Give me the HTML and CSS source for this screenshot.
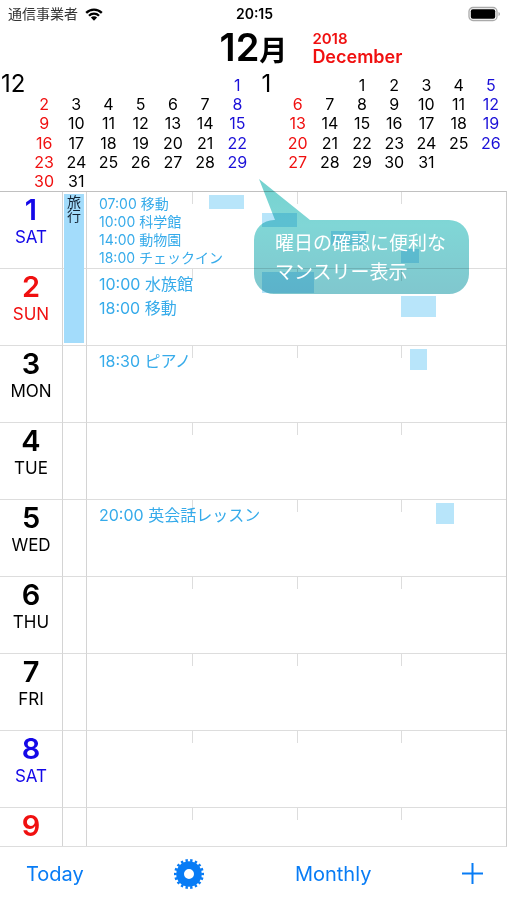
FILE: index.html
```html
<!DOCTYPE html>
<html lang="ja">
<head>
<meta charset="utf-8">
<meta name="viewport" content="width=device-width, initial-scale=1">
<title>12月</title>
<link rel="stylesheet" href="styles.css">
</head>
<body>
<div class="status">
  <div class="carrier">
    <span>通信事業者</span>
    <svg width="18" height="13" viewBox="0 0 18 13" aria-hidden="true"><path d="M1.2 4.900a11 11 0 0 1 15.600 0M4 7.800a7 7 0 0 1 10 0" fill="none" stroke="#000" stroke-width="2.300"/><path d="M5.900 9.500a4.400 4.400 0 0 1 6.200 0L9 12.700z"/></svg>
  </div>
  <div class="clock">20:15</div>
  <svg class="battery" width="33" height="16" viewBox="0 0 33 16" aria-hidden="true"><rect x="1" y="1.500" width="28" height="13" rx="4" fill="#fff" stroke="#aaa" stroke-width="1.300"/><rect x="2.800" y="3.300" width="24.400" height="9.400" rx="2"/><path d="M30.500 6v4q1.500-.5 1.500-2t-1.500-2" fill="#aaa"/></svg>
</div>

<header class="title">
  <h1>12<span>月</span></h1>
  <div class="title-en"><div class="year">2018</div><div class="month">December</div></div>
</header>

<div class="months">
  <section class="mini">
    <h2>12</h2>
    <table>
      <tr><td></td><td></td><td></td><td></td><td></td><td></td><td>1</td></tr>
      <tr><td>2</td><td>3</td><td>4</td><td>5</td><td>6</td><td>7</td><td>8</td></tr>
      <tr><td>9</td><td>10</td><td>11</td><td>12</td><td>13</td><td>14</td><td>15</td></tr>
      <tr><td>16</td><td>17</td><td>18</td><td>19</td><td>20</td><td>21</td><td>22</td></tr>
      <tr><td>23</td><td>24</td><td>25</td><td>26</td><td>27</td><td>28</td><td>29</td></tr>
      <tr><td>30</td><td>31</td><td></td><td></td><td></td><td></td><td></td></tr>
    </table>
  </section>
  <section class="mini">
    <h2 class="next">1</h2>
    <table>
      <tr><td></td><td></td><td>1</td><td>2</td><td>3</td><td>4</td><td>5</td></tr>
      <tr><td>6</td><td>7</td><td>8</td><td>9</td><td>10</td><td>11</td><td>12</td></tr>
      <tr><td>13</td><td>14</td><td>15</td><td>16</td><td>17</td><td>18</td><td>19</td></tr>
      <tr><td>20</td><td>21</td><td>22</td><td>23</td><td>24</td><td>25</td><td>26</td></tr>
      <tr><td>27</td><td>28</td><td>29</td><td>30</td><td>31</td><td></td><td></td></tr>
      <tr><td>&nbsp;</td><td></td><td></td><td></td><td></td><td></td><td></td></tr>
    </table>
  </section>
</div>

<main class="week">
  <div class="span-event">旅行</div>

  <div class="date sat"><b>1</b><span>SAT</span></div>
  <div class="lane"></div>
  <div class="timeline small">
    <div class="ticks"><i></i><i></i><i></i><i></i></div>
    <div class="event"><div class="bar" style="grid-column: 15 / span 4"></div><p>07:00 移動</p></div>
    <div class="event"><div class="bar" style="grid-column: 21 / span 4"></div><p>10:00 科学館</p></div>
    <div class="event"><div class="bar" style="grid-column: 29 / span 4"></div><p>14:00 動物園</p></div>
    <div class="event"><div class="bar" style="grid-column: 37 / span 2"></div><p>18:00 チェックイン</p></div>
  </div>

  <div class="date sun"><b>2</b><span>SUN</span></div>
  <div class="lane"></div>
  <div class="timeline">
    <div class="ticks"><i></i><i></i><i></i><i></i></div>
    <div class="event"><div class="bar" style="grid-column: 21 / span 6"></div><p>10:00 水族館</p></div>
    <div class="event"><div class="bar" style="grid-column: 37 / span 4"></div><p>18:00 移動</p></div>
  </div>

  <div class="date"><b>3</b><span>MON</span></div>
  <div class="lane"></div>
  <div class="timeline">
    <div class="ticks"><i></i><i></i><i></i><i></i></div>
    <div class="event"><div class="bar" style="grid-column: 38 / span 2"></div><p>18:30 ピアノ</p></div>
  </div>

  <div class="date"><b>4</b><span>TUE</span></div>
  <div class="lane"></div>
  <div class="timeline"><div class="ticks"><i></i><i></i><i></i><i></i></div></div>

  <div class="date"><b>5</b><span>WED</span></div>
  <div class="lane"></div>
  <div class="timeline">
    <div class="ticks"><i></i><i></i><i></i><i></i></div>
    <div class="event"><div class="bar" style="grid-column: 41 / span 2"></div><p>20:00 英会話レッスン</p></div>
  </div>

  <div class="date"><b>6</b><span>THU</span></div>
  <div class="lane"></div>
  <div class="timeline"><div class="ticks"><i></i><i></i><i></i><i></i></div></div>

  <div class="date"><b>7</b><span>FRI</span></div>
  <div class="lane"></div>
  <div class="timeline"><div class="ticks"><i></i><i></i><i></i><i></i></div></div>

  <div class="date sat"><b>8</b><span>SAT</span></div>
  <div class="lane"></div>
  <div class="timeline"><div class="ticks"><i></i><i></i><i></i><i></i></div></div>

  <div class="date sun"><b>9</b></div>
  <div class="lane"></div>
  <div class="timeline"><div class="ticks"><i></i><i></i><i></i><i></i></div></div>
</main>

<nav class="toolbar">
  <button type="button">Today</button>
  <button type="button" aria-label="Settings">
    <svg width="30" height="30" viewBox="0 0 30 30"><circle cx="15" cy="15" r="8.900" fill="none" stroke="currentColor" stroke-width="7.800"/><circle cx="15" cy="15" r="13.600" fill="none" stroke="currentColor" stroke-width="2.800" pathLength="36" stroke-dasharray="1 1" stroke-dashoffset=".5"/></svg>
  </button>
  <button type="button">Monthly</button>
  <button type="button" aria-label="Add">
    <svg width="21" height="21" viewBox="0 0 21 21"><path d="M10.500 0v21M0 10.500h21" stroke="currentColor" stroke-width="2"/></svg>
  </button>
</nav>

<svg class="callout-shape" width="215" height="115" viewBox="0 0 215 115" aria-hidden="true">
  <defs><linearGradient id="teal" x1="0" y1="0" x2="0" y2="1"><stop offset="0" stop-color="#74d2cf"/><stop offset=".4" stop-color="#80d6d6"/><stop offset="1" stop-color="#80c7ce"/></linearGradient></defs>
  <path fill="url(#teal)" d="M5 0L56 41H195a20 20 0 0 1 20 20V95a20 20 0 0 1-20 20H20a20 20 0 0 1-20-20V61a20 20 0 0 1 20-20H21z"/>
</svg>
<p class="callout-text">曜日の確認に便利な<br>マンスリー表示</p>
</body>
</html>
```
FILE: styles.css
```css
* { box-sizing: border-box; }

body {
  position: relative;
  display: flex;
  flex-direction: column;
  height: 100vh;
  margin: 0;
  background: #fff;
  color: #000;
  font-family: Inter, "Noto Sans CJK JP", sans-serif;
  overflow: hidden;
}

h1, h2, p { margin: 0; font-weight: 400; }

.status {
  display: grid;
  grid-template-columns: 1fr auto 1fr;
  align-items: center;
  height: 28px;
  padding: 0 6px 0 8px;
  font-size: 14px;
  line-height: 20px;
}
.carrier { display: flex; align-items: center; gap: 7px; color: #333; }
.clock { font-weight: 600; }
.battery { justify-self: end; }

.title {
  display: grid;
  grid-template-columns: 1fr auto 1fr;
  align-items: center;
  column-gap: 25px;
  height: 47px;
  padding-bottom: 8px;
}
.title h1 {
  grid-column: 2;
  font-size: 38px;
  line-height: 38px;
  font-weight: 600;
}
.title h1 span { font-size: 28px; }
.title-en { color: #f01010; font-weight: 600; }
.year { font-size: 15px; line-height: 16px; }
.month { font-size: 18px; line-height: 20px; }

.months { display: grid; grid-template-columns: 1fr 1fr; }
.mini { display: grid; grid-template-columns: 28px 1fr; }
.mini h2 { font-size: 24px; line-height: 18px; padding-left: 1px; }
.mini .next { padding-left: 8px; }
.mini table {
  width: 100%;
  height: 116px;
  table-layout: fixed;
  border-collapse: collapse;
  font-size: 16px;
  line-height: 18px;
  text-align: center;
}
.mini td { padding: 0; }
.mini td:first-child { color: #f01010; }
.mini td:last-child { color: #1a0fd8; }

.week {
  flex: 1;
  min-height: 0;
  display: grid;
  grid-template-columns: 62px 24px 1fr;
  grid-auto-rows: 77px;
  overflow: hidden;
  border-top: 1px solid #c0c0c0;
  border-bottom: 1px solid #ddd;
  border-right: 1px solid #ccc;
}
.date, .lane, .timeline { border-bottom: 1px solid #ddd; }
.date { grid-column: 1; padding-top: 1px; text-align: center; }
.lane { grid-column: 2; border-left: 1px solid #d4d4d4; }
.date b {
  display: block;
  font-size: 29px;
  line-height: 34px;
  font-weight: 600;
}
.date span { display: block; font-size: 17px; line-height: 20px; }
.sat { color: #1408e8; }
.sun { color: #f01010; }

.span-event {
  grid-column: 2;
  grid-row: 1 / 3;
  z-index: 1;
  margin: 2px 2px 3px;
  padding: 1px 3px;
  background: #a3dcfb;
  color: #123;
  font-size: 14px;
  line-height: 14px;
}
.date:nth-of-type(2), .date:nth-of-type(2) + .lane,
.date:nth-of-type(2) + .lane + .timeline { grid-row: 1; }
.date:nth-of-type(5), .date:nth-of-type(5) + .lane,
.date:nth-of-type(5) + .lane + .timeline { grid-row: 2; }

.timeline {
  grid-column: 3;
  display: grid;
  grid-template-columns: 1fr;
  grid-auto-rows: 24px;
  padding-top: 3px;
  border-left: 1px solid #d4d4d4;
}
.ticks {
  grid-area: 1 / 1;
  display: grid;
  grid-template-columns: repeat(4, 1fr);
  height: 12px;
  margin-top: -3px;
}
.ticks i + i { border-left: 1px solid #ddd; }
.event {
  grid-column: 1;
  display: grid;
  grid-template-columns: repeat(48, 1fr);
}
.ticks + .event { grid-row: 1; }
.bar { grid-row: 1; height: 21px; background: #b8e5fa; }
.event p {
  grid-area: 1 / 1 / 2 / -1;
  padding-left: 12px;
  color: #36abea;
  font-size: 16px;
  line-height: 24px;
}
.small { grid-auto-rows: 18px; }
.small .bar { height: 14px; }
.small .event p { font-size: 14px; line-height: 18px; }

.toolbar {
  display: flex;
  align-items: center;
  justify-content: space-between;
  height: 53px;
  padding: 0 24px 0 26px;
}
.toolbar button {
  display: flex;
  padding: 0;
  border: 0;
  background: none;
  color: #087cf5;
  font: inherit;
  font-size: 20px;
  line-height: 24px;
}

.callout-shape {
  position: absolute;
  top: 179px;
  left: 254px;
  z-index: 2;
  mix-blend-mode: multiply;
}
.callout-text {
  position: absolute;
  top: 229px;
  left: 275px;
  z-index: 3;
  color: #fff;
  font-size: 19px;
  line-height: 29px;
}
```
